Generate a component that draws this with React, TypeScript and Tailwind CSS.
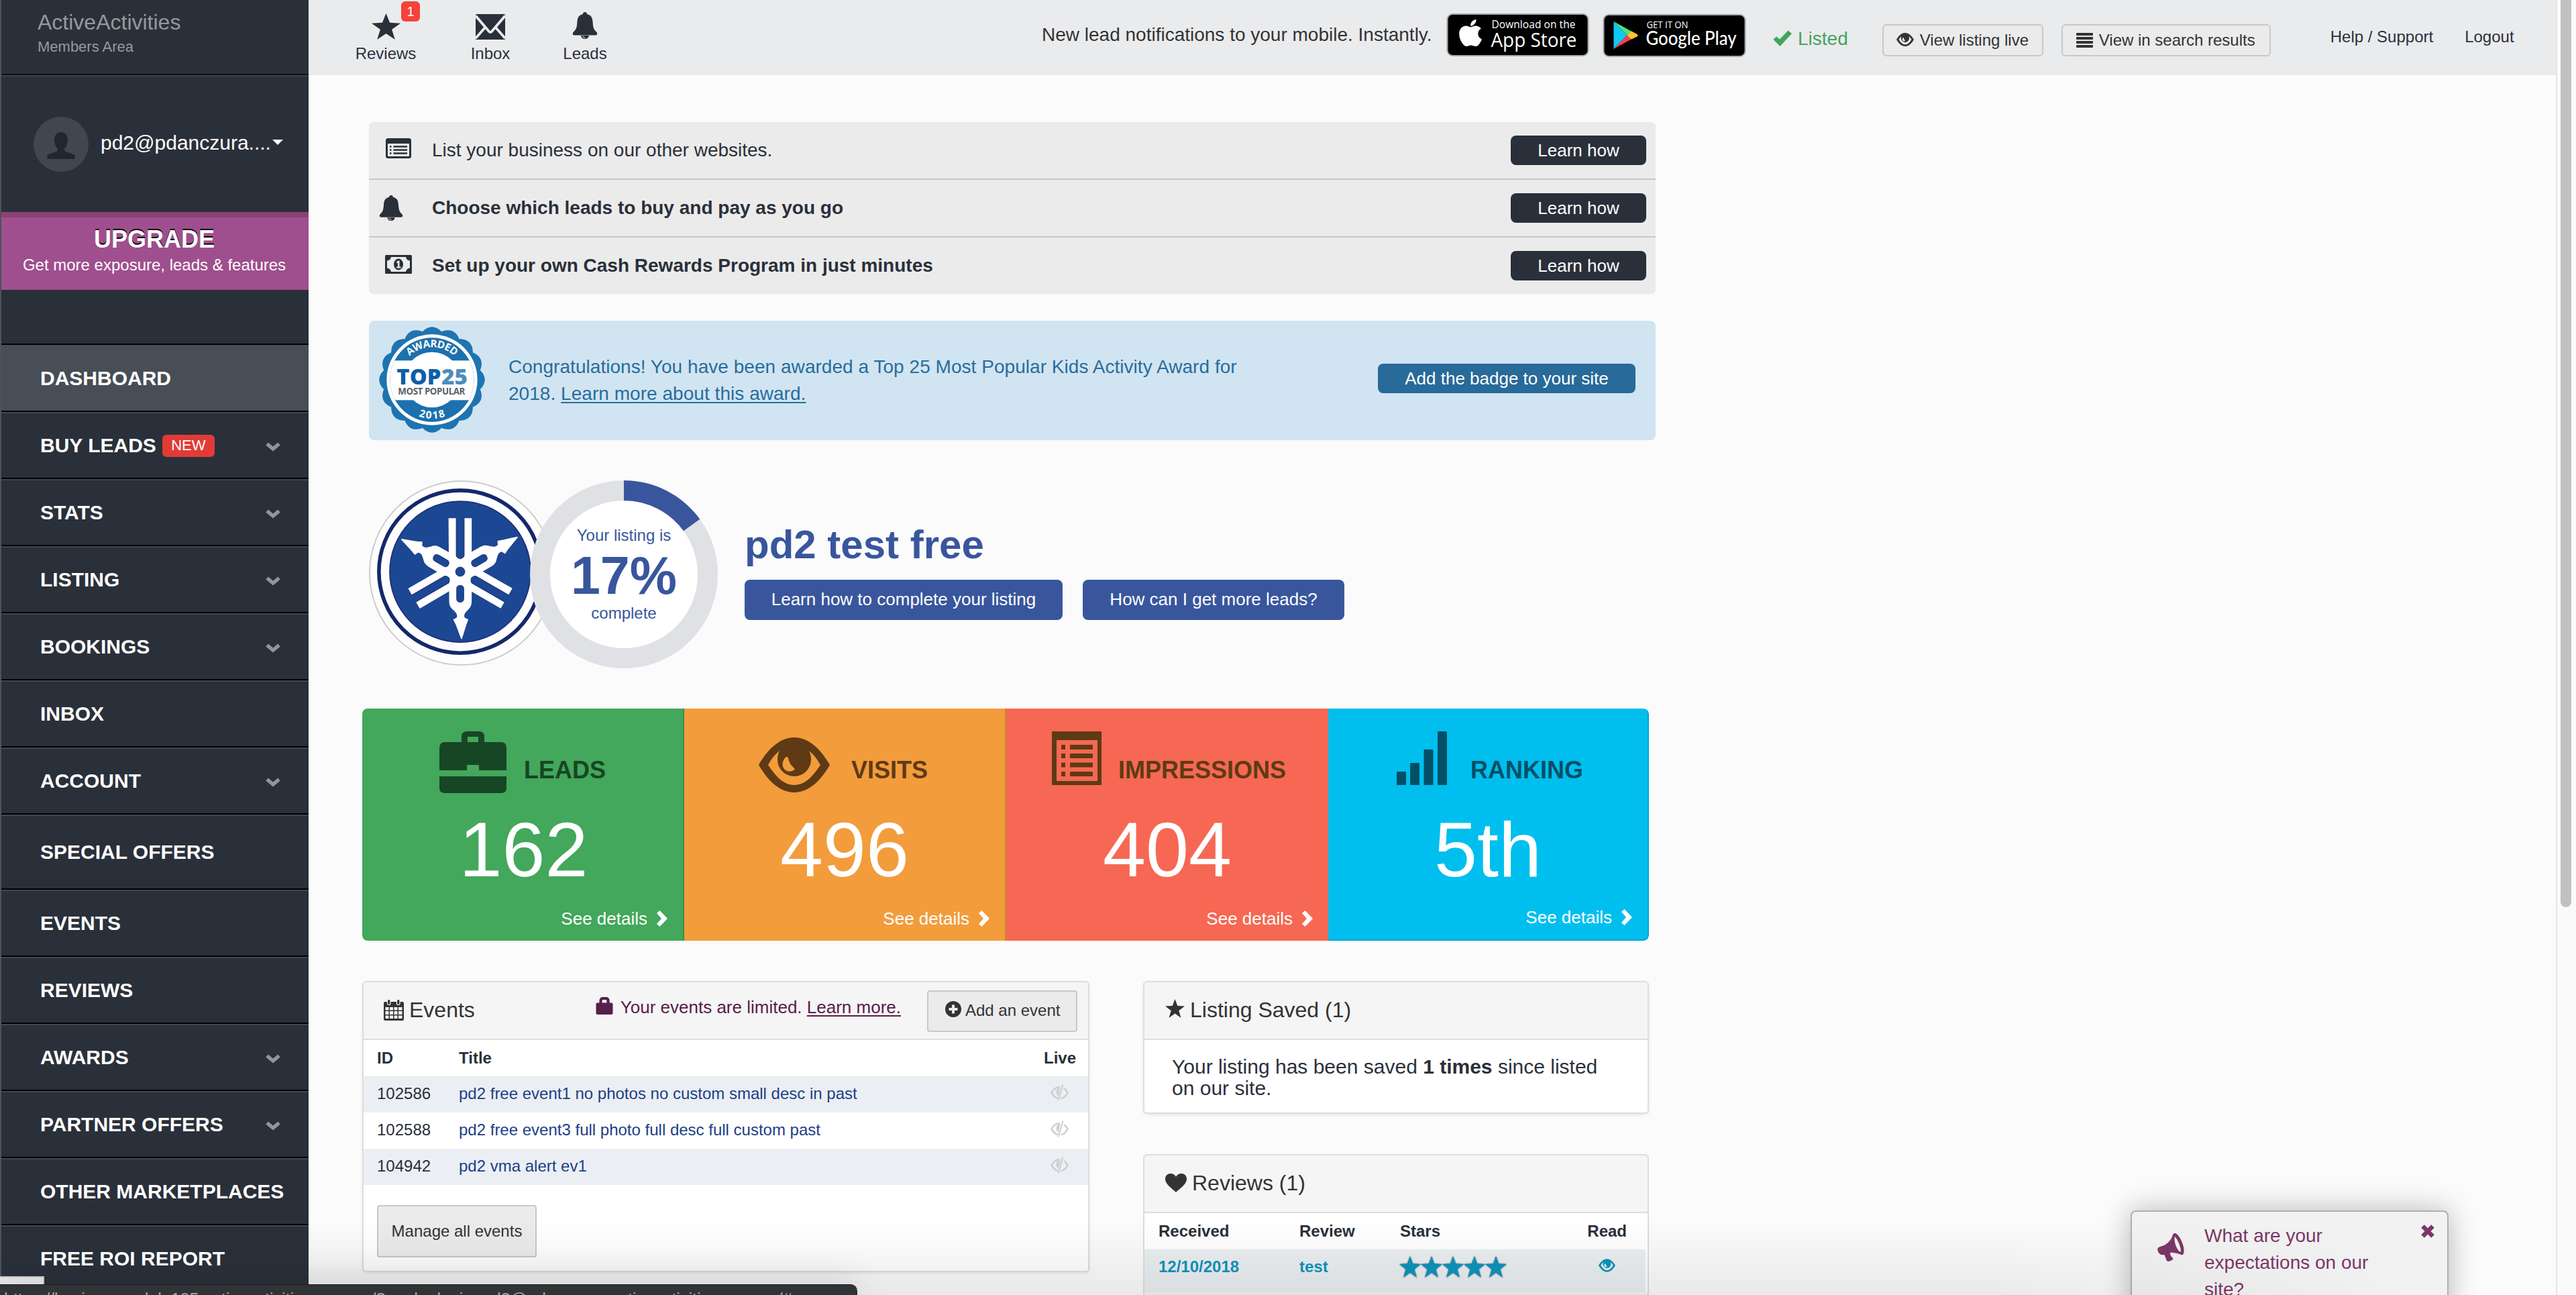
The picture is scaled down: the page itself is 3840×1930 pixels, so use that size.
import React from "react";
import { FaApple } from "react-icons/fa";

type IconProps = { className?: string };

const StarIcon = ({ className }: IconProps) => (
  <svg viewBox="0 0 100 96" preserveAspectRatio="none" className={className} fill="currentColor">
    <path d="M50 0L63 34L100 36L70 59L81 96L50 74L19 96L30 59L0 36L37 34Z" />
  </svg>
);

const BellIcon = ({ className }: IconProps) => (
  <svg viewBox="0 0 38 40" preserveAspectRatio="none" className={className} fill="currentColor">
    <path d="M19 0C21 0 22 1 22 3C28 4.500 30 8 30.500 14C31 23 32 26 36.500 30Q38.500 34 35 34.500H3Q-0.500 34 1.500 30C6 26 7 23 7.500 14C8 8 10 4.500 16 3C16 1 17 0 19 0Z" />
    <path d="M13 35H25C24.500 38 22.500 40 19 40S13.500 38 13 35Z" />
    <path d="M15.500 35.500Q16 38.300 19.500 38.500" fill="none" stroke="#ebebeb" strokeWidth="1" />
  </svg>
);

const MailIcon = ({ className }: IconProps) => (
  <svg viewBox="0 0 44 38" className={className}>
    <rect width="44" height="38" rx="1.500" fill="currentColor" />
    <path d="M0 2.500L20 26Q22 28 24 26L44 2.500M0 36L15 19M44 36L29 19" fill="none" stroke="#eaebed" strokeWidth="3.800" />
  </svg>
);

const ListAltIcon = ({ className }: IconProps) => (
  <svg viewBox="0 0 38 30" className={className}>
    <rect width="38" height="30" rx="3.500" fill="currentColor" />
    <rect x="3" y="8" width="32" height="19" rx="1" fill="#ebebeb" />
    <path d="M6 12.500H8.500M6 17.500H8.500M6 22.500H8.500M11.500 12.500H32M11.500 17.500H32M11.500 22.500H32" stroke="currentColor" strokeWidth="2.400" />
  </svg>
);

const MoneyIcon = ({ className }: IconProps) => (
  <svg viewBox="0 0 40 28" className={className}>
    <rect width="40" height="28" rx="1.500" fill="currentColor" />
    <path d="M9 3H31Q32 8 37 8.500V19.500Q32 20 31 25H9Q8 20 3 19.500V8.500Q8 8 9 3Z" fill="#ebebeb" />
    <ellipse cx="20" cy="14" rx="7" ry="8.500" fill="currentColor" />
    <path d="M17 10.500L19.500 8.500H21.500V17.500H23.500V19.500H17V17.500H19V11.500L17.500 12.500Z" fill="#ebebeb" />
  </svg>
);

const EyeIcon = ({ className }: IconProps) => (
  <svg viewBox="0 0 106 82" className={className} fill="currentColor">
    <path
      fillRule="evenodd"
      d="M0 41C12 20 30 0 53 0S94 20 106 41C94 62 76 82 53 82S12 62 0 41ZM14 41C24 56 36 71 53 71S82 56 92 41C88 34 84 27 75 20C77 24 78 28 78 33A25 25 0 0 1 28 33C28 28 29 24 31 20C22 27 18 34 14 41ZM41 29C35 33 34 43 38 47C42 52 50 52 54 47C50 43 46 40 44 31Q43 28 41 29Z"
    />
  </svg>
);

const EyeOffIcon = ({ className }: IconProps) => (
  <svg viewBox="0 0 27 25" className={className} fill="none" stroke="currentColor">
    <path d="M14 4C8 4 4 8 1.500 12.500C4 17 7 20 11 21" strokeWidth="2.600" />
    <path d="M20 6C22.500 7.500 24.500 10 25.500 12.500C23.500 16.500 20 20.500 15.500 21" strokeWidth="2.600" />
    <path d="M12 6C8 8 8 15 11.500 17L14 5Z" fill="currentColor" strokeWidth="1" />
    <path d="M18.500 0.500L11.500 24.500" strokeWidth="2.200" />
  </svg>
);

const BriefcaseIcon = ({ className }: IconProps) => (
  <svg viewBox="0 0 100 92" className={className} fill="currentColor">
    <path
      fillRule="evenodd"
      d="M33 16V8Q33 0 41 0H59Q67 0 67 8V16H92Q100 16 100 25V58H59V50H41V58H0V25Q0 16 8 16ZM42 8V16H58V8Z"
    />
    <path d="M0 67H100V84Q100 92 92 92H8Q0 92 0 84Z" />
  </svg>
);

const ListCardIcon = ({ className }: IconProps) => (
  <svg viewBox="0 0 74 80" className={className} fill="currentColor">
    <path
      fillRule="evenodd"
      d="M1 0H73Q74 0 74 1V79Q74 80 73 80H1Q0 80 0 79V1Q0 0 1 0ZM8 13Q7 13 7 14V73Q7 74 8 74H67Q68 74 68 73V14Q68 13 67 13Z"
    />
    <path d="M14 20h6v7h-6zM27 20h34v7h-34zM14 33h6v7h-6zM27 33h34v7h-34zM14 46.500h6v7h-6zM27 46.500h34v7h-34zM14 60h6v7h-6zM27 60h34v7h-34z" />
  </svg>
);

const SignalIcon = ({ className }: IconProps) => (
  <svg viewBox="0 0 75 80" className={className} fill="currentColor">
    <rect x="0" y="60" width="14" height="20" rx="1.500" />
    <rect x="20" y="47" width="14" height="33" rx="1.500" />
    <rect x="40.500" y="27" width="14" height="53" rx="1.500" />
    <rect x="61" y="0" width="14" height="80" rx="1.500" />
  </svg>
);

const CheckIcon = ({ className }: IconProps) => (
  <svg viewBox="0 0 28 24" className={className} fill="currentColor">
    <path d="M0.500 14L5 9.500L10 13.500L22.500 0.500L28 5L10.500 24Z" />
  </svg>
);

const ChevronDown = ({ className }: IconProps) => (
  <svg viewBox="0 0 22 14" className={className} fill="none" stroke="currentColor" strokeWidth="5.500">
    <path d="M2 2.500L11 10L20 2.500" />
  </svg>
);

const ChevronRight = ({ className }: IconProps) => (
  <svg viewBox="0 0 16 24" className={className} fill="currentColor">
    <path d="M0 4L4.500 0L16 12L4.500 24L0 20L7 12Z" />
  </svg>
);

const CalendarIcon = ({ className }: IconProps) => (
  <svg viewBox="0 0 30 32" className={className}>
    <path d="M2 4H28Q30 4 30 6V30Q30 32 28 32H2Q0 32 0 30V6Q0 4 2 4Z" fill="currentColor" />
    <path d="M2.500 12h5v4.500h-5zM9 12h5v4.500h-5zM15.500 12h5v4.500h-5zM22 12h5.500v4.500h-5.500zM2.500 18h5v5h-5zM9 18h5v5h-5zM15.500 18h5v5h-5zM22 18h5.500v5h-5.500zM2.500 24.500h5v4.500h-5zM9 24.500h5v4.500h-5zM15.500 24.500h5v4.500h-5zM22 24.500h5.500v4.500h-5.500z" fill="#f5f5f5" />
    <rect x="5.500" y="0.500" width="4.500" height="8" rx="2" fill="currentColor" stroke="#f5f5f5" strokeWidth="1.200" />
    <rect x="19.500" y="0.500" width="4.500" height="8" rx="2" fill="currentColor" stroke="#f5f5f5" strokeWidth="1.200" />
  </svg>
);

const LockIcon = ({ className }: IconProps) => (
  <svg viewBox="0 0 26 26" className={className}>
    <rect x="0.500" y="8.500" width="25" height="17.500" rx="2" fill="currentColor" />
    <path d="M7.500 10V5.500Q7.500 2 11 2H15Q18.500 2 18.500 5.500V10" fill="none" stroke="currentColor" strokeWidth="4.200" />
  </svg>
);

const PlusCircle = ({ className }: IconProps) => (
  <svg viewBox="0 0 24 24" className={className}>
    <circle cx="12" cy="12" r="12" fill="currentColor" />
    <path d="M12 5.500V18.500M5.500 12H18.500" stroke="#ebebeb" strokeWidth="4" />
  </svg>
);

const HeartIcon = ({ className }: IconProps) => (
  <svg viewBox="0 0 32 28" className={className} fill="currentColor">
    <path d="M16 28C13 24 0 17 0 8C0 3 3.500 0 8 0C12 0 15 2.500 16 5C17 2.500 20 0 24 0C28.500 0 32 3 32 8C32 17 19 24 16 28Z" />
  </svg>
);

const MegaphoneIcon = ({ className }: IconProps) => (
  <svg viewBox="0 0 40 42" className={className} fill="currentColor">
    <path
      fillRule="evenodd"
      d="M25 0C29 -1 34 6 37 14C40 22 41 30 37 32.500C32 31 25 28 19 29C19 32 20 34 22 36C24 37 23 39 22 40L17 42C15 42 14 41 13.500 40L10.500 32C6 33 3 31.500 1 27.500C-0.500 24 0 21 4 20C14 18 21 10 23 2Q23.500 0.500 25 0ZM26 5C24 10 28 24 34 28C37 27 32 11 26 5Z"
    />
  </svg>
);

const Person = ({ className }: IconProps) => (
  <svg viewBox="0 0 42 40" className={className} fill="currentColor">
    <path d="M21 0C28 0 31 5 31 12C31 18 28 22 26 25V27C28 31 40 31 41.500 35V40H0.500V35C2 31 14 31 16 27V25C14 22 11 18 11 12C11 5 14 0 21 0Z" />
  </svg>
);

function AppStoreBadge() {
  return (
    <svg viewBox="0 0 212 64" className="h-[64px] w-[213px]">
      <rect x="1" y="1" width="210" height="62" rx="8" fill="#000" stroke="#a6a6a6" strokeWidth="2" />
      <text x="67" y="22" textLength="125" fontFamily="Open Sans, sans-serif" fontSize="15.500" fontWeight="500" fill="#fff">Download on the</text>
      <text x="66" y="50" textLength="128" lengthAdjust="spacingAndGlyphs" fontFamily="Open Sans, sans-serif" fontSize="29.500" fontWeight="500" fill="#fff">App Store</text>
    </svg>
  );
}

function GooglePlayBadge() {
  return (
    <svg viewBox="0 0 213 64" className="h-[64px] w-[214px]">
      <rect x="1" y="1" width="211" height="62" rx="8" fill="#000" stroke="#a6a6a6" strokeWidth="2" />
      <path d="M16 11V52L36 31.500Z" fill="#10c8f5" />
      <path d="M16 11L43 26L36 31.500Z" fill="#4fe27a" />
      <path d="M16 52L43 37L36 31.500Z" fill="#f6404a" />
      <path d="M42.500 25.500L51 30Q53 31.500 51 33.500L42.500 37.500L36 31.500Z" fill="#fdc62f" />
      <text x="65" y="21" textLength="62" lengthAdjust="spacingAndGlyphs" fontFamily="Open Sans, sans-serif" fontSize="14" fill="#fff">GET IT ON</text>
      <text x="64" y="46" textLength="135" lengthAdjust="spacingAndGlyphs" fontFamily="Lato, sans-serif" fontSize="29" fontWeight="500" fill="#fff">Google Play</text>
    </svg>
  );
}

const scallop = (() => {
  let d = "";
  for (let i = 0; i < 720; i++) {
    const t = (i * Math.PI) / 360;
    const r = 219 + 17 * Math.pow(Math.abs(Math.cos(8 * t)), 0.9);
    d += `${i ? "L" : "M"}${(240 + r * Math.sin(t)).toFixed(1)} ${(240 - r * Math.cos(t)).toFixed(1)}`;
  }
  return d + "Z";
})();

function AwardBadge() {
  return (
    <svg viewBox="0 0 480 480" className="h-[160px] w-[160px]">
      <defs>
        <path id="arcTop" d="M94 240A146 146 0 0 1 386 240" />
        <path id="arcBottom" d="M66 240A174 174 0 0 0 414 240" />
        <clipPath id="disc"><circle cx="240" cy="240" r="188" /></clipPath>
      </defs>
      <path d={scallop} fill="#1d74b0" />
      <circle cx="240" cy="240" r="203" fill="#fff" />
      <circle cx="240" cy="240" r="188" fill="#1d70ae" />
      <g clipPath="url(#disc)">
        <circle cx="240" cy="240" r="124" fill="#fff" />
        <rect x="40" y="154" width="400" height="177" fill="#fff" />
      </g>
      <text fontFamily="Open Sans, sans-serif" fontSize="46" fontWeight="700" fill="#fff" textAnchor="middle">
        <textPath href="#arcTop" startOffset="50%" textLength="222">AWARDED</textPath>
      </text>
      <text fontFamily="Open Sans, sans-serif" fontSize="46" fontWeight="700" fill="#fff" textAnchor="middle">
        <textPath href="#arcBottom" startOffset="50%" textLength="122">2018</textPath>
      </text>
      <text x="82" y="261" textLength="198" lengthAdjust="spacingAndGlyphs" fontFamily="Open Sans, sans-serif" fontSize="96" fontWeight="800" fill="#0c5fa8">TOP</text>
      <text x="282" y="261" textLength="117" lengthAdjust="spacingAndGlyphs" fontFamily="Open Sans, sans-serif" fontSize="96" fontWeight="800" fill="#4d8dbf">25</text>
      <text x="88" y="307" textLength="300" fontFamily="Open Sans, sans-serif" fontSize="40" fontWeight="700" fill="#5d5f63">MOST POPULAR</text>
    </svg>
  );
}

function ForkLogo() {
  const turns = ["rotate(0)", "rotate(120)", "rotate(240)"];
  return (
    <svg viewBox="-413 -413 826 826" className="h-[272px] w-[272px]">
      <g transform="translate(-6 -6)">
        <circle r="368" fill="#fdfdfd" stroke="#14286b" strokeWidth="17" />
        <circle r="319" fill="#1c4792" stroke="#1f2d78" strokeWidth="5" />
        {turns.map((t) => (
          <path
            key={t}
            transform={t}
            fill="#fff"
            d="M-53 -242H-18V-60H18V-242H52V135C51 165 36 168 22 188Q16 196 20 208L37 216L28 240L8 304H4L-20 240L-32 216L-16 208Q-12 196 -18 188C-32 168 -50 165 -50 135Z"
          />
        ))}
        {turns.map((t) => (
          <g key={t} transform={t} fill="#1c4792" stroke="#22307a" strokeWidth="3">
            <rect x="-16" y="62" width="32" height="76" rx="14" />
            <path d="M-18 -242V-72Q-16 -62 0 -58Q16 -62 18 -72V-242" />
          </g>
        ))}
        <circle r="21" fill="#1c4792" stroke="#22307a" strokeWidth="3" />
      </g>
    </svg>
  );
}

function Donut() {
  return (
    <svg viewBox="-140 -140 280 280" className="absolute inset-0 h-[280px] w-[280px]">
      <circle r="125" fill="#fff" stroke="#e0e1e5" strokeWidth="30" />
      <path d="M0 -125A125 125 0 0 1 101.130 -73.470" fill="none" stroke="#39569d" strokeWidth="30" />
    </svg>
  );
}

type NavEntry = { label: string; badge?: string; arrow?: boolean; tall?: boolean; active?: boolean };
const nav: NavEntry[] = [
  { label: "DASHBOARD", active: true },
  { label: "BUY LEADS", badge: "NEW", arrow: true },
  { label: "STATS", arrow: true },
  { label: "LISTING", arrow: true },
  { label: "BOOKINGS", arrow: true },
  { label: "INBOX" },
  { label: "ACCOUNT", arrow: true },
  { label: "SPECIAL OFFERS", tall: true },
  { label: "EVENTS" },
  { label: "REVIEWS" },
  { label: "AWARDS", arrow: true },
  { label: "PARTNER OFFERS", arrow: true },
  { label: "OTHER MARKETPLACES" },
  { label: "FREE ROI REPORT" },
];

function NavItem({ item }: { item: NavEntry }) {
  return (
    <li
      className={`flex shrink-0 items-center border-t-2 border-b-2 border-b-black pr-[42px] pl-[58px] ${
        item.active ? "border-t-[#474e56] bg-[#474e56]" : "border-t-[#3f4751]"
      } ${item.tall ? "h-[112px]" : "h-[100px]"}`}
    >
      <span className="text-[30px] leading-none font-bold whitespace-nowrap text-white">{item.label}</span>
      {item.badge && (
        <span className="ml-[9px] flex h-[33px] w-[78px] items-center justify-center rounded-md bg-[#e23b36] text-[22px] leading-none text-white">
          {item.badge}
        </span>
      )}
      {item.arrow && <ChevronDown className="mt-1 ml-auto h-[14px] w-[22px] text-[#959595]" />}
    </li>
  );
}

function Sidebar() {
  return (
    <aside className="flex h-full w-[460px] shrink-0 flex-col overflow-hidden border-l-2 border-[#4d5359] bg-[#2a303a]">
      <div className="flex h-[112px] shrink-0 flex-col border-b-2 border-[#0c0f13] pt-[17px] pl-[54px]">
        <span className="text-[32px] leading-[32px] text-[#97999c]">ActiveActivities</span>
        <span className="mt-[10px] text-[22px] leading-[22px] text-[#97999c]">Members Area</span>
      </div>
      <div className="flex h-[204px] shrink-0 items-center border-t-2 border-[#3b4551] pl-[48px]">
        <div className="flex h-[82px] w-[82px] items-center justify-center rounded-full bg-[#404751]">
          <Person className="mt-1 h-[40px] w-[42px] text-[#22272f]" />
        </div>
        <span className="mb-[5px] ml-[18px] w-[256px] text-[30px] leading-none text-white">pd2@pdanczura....</span>
        <span className="mt-[-6px] h-0 w-0 border-x-8 border-t-8 border-x-transparent border-t-white" />
      </div>
      <div className="flex h-[116px] shrink-0 flex-col items-center border-t-8 border-[#8c4174] bg-[#9f4f8e] pt-[15px] pr-[2px] text-white">
        <span className="text-[36px] leading-[36px] font-bold [text-shadow:0_-2px_0_#000]">UPGRADE</span>
        <span className="mt-[8px] text-[24px] leading-[24px] whitespace-nowrap">Get more exposure, leads &amp; features</span>
      </div>
      <div className="h-[82px] shrink-0 border-b-2 border-black" />
      <ul className="flex flex-col">
        {nav.map((n) => (
          <NavItem key={n.label} item={n} />
        ))}
      </ul>
    </aside>
  );
}

function Header() {
  return (
    <header className="flex h-[112px] shrink-0 items-start bg-[#eaebed] text-[#2a303a]">
      <nav className="flex pl-[69px] text-[24px] leading-none">
        <a className="relative flex w-[92px] flex-col items-center">
          <StarIcon className="mt-[20px] h-[39px] w-[43px]" />
          <span className="mt-[9px]">Reviews</span>
          <span className="absolute top-[2px] left-[69px] flex h-[30px] w-[28px] items-center justify-center rounded-md bg-[#f5423a] text-[20px] text-white">1</span>
        </a>
        <a className="ml-[79px] flex w-[62px] flex-col items-center">
          <MailIcon className="mt-[21px] h-[38px] w-[44px]" />
          <span className="mt-[9px]">Inbox</span>
        </a>
        <a className="ml-[76px] flex w-[68px] flex-col items-center">
          <BellIcon className="mt-[18px] h-[40px] w-[38px]" />
          <span className="mt-[10px]">Leads</span>
        </a>
      </nav>
      <div className="ml-[647px] flex">
        <span className="mt-[38px] w-[583px] text-[28px] leading-none whitespace-nowrap text-[#333]">
          New lead notifications to your mobile. Instantly.
        </span>
        <span className="relative mt-[20px] ml-[20px]">
          <AppStoreBadge />
          <FaApple className="absolute top-[6px] left-[16px] h-[46px] w-[40px] text-white" />
        </span>
        <span className="mt-[21px] ml-[20px]">
          <GooglePlayBadge />
        </span>
      </div>
      <div className="mt-[44px] ml-[40px] flex items-start text-[28px] leading-none text-[#42a55d]">
        <CheckIcon className="mt-[1px] h-[24px] w-[28px]" />
        <span className="ml-[9px]">Listed</span>
      </div>
      <div className="mt-[36px] ml-[51px] flex gap-[27px] text-[24px] leading-none whitespace-nowrap text-[#333]">
        <button className="flex h-[48px] w-[240px] items-center rounded-md border-2 border-[#c8c8c8] bg-[#ebebeb] pl-[19px]">
          <EyeIcon className="mb-[2px] h-[20px] w-[26px]" />
          <span className="ml-[9px]">View listing live</span>
        </button>
        <button className="flex h-[48px] w-[312px] items-center rounded-md border-2 border-[#c8c8c8] bg-[#ebebeb] pl-[20px]">
          <span className="flex h-[22px] w-[25px] flex-col justify-between">
            <i className="h-1 rounded-[1px] bg-[#333]" />
            <i className="h-1 rounded-[1px] bg-[#333]" />
            <i className="h-1 rounded-[1px] bg-[#333]" />
            <i className="h-1 rounded-[1px] bg-[#333]" />
          </span>
          <span className="ml-[9px]">View in search results</span>
        </button>
      </div>
      <div className="mt-[43px] ml-[89px] flex gap-[47px] text-[24px] leading-none whitespace-nowrap">
        <a>Help / Support</a>
        <a>Logout</a>
      </div>
    </header>
  );
}

function NoticeRow({ icon, text, bold, last }: { icon: React.ReactNode; text: string; bold?: boolean; last?: boolean }) {
  return (
    <div className={`flex items-center pr-[14px] ${last ? "h-[84px]" : "h-[86px] border-b-2 border-[#c6c6c6]"}`}>
      <span className="flex w-[94px]">{icon}</span>
      <span className={`text-[28px] leading-none ${bold ? "font-bold" : ""}`}>{text}</span>
      <button className="ml-auto flex h-[44px] w-[202px] items-center justify-center rounded-lg bg-[#2a303a] pb-[1px] text-[26px] leading-none text-white">
        Learn how
      </button>
    </div>
  );
}

function Notices() {
  return (
    <section className="flex h-[256px] flex-col rounded-md bg-[#ebebeb] text-[#2a303a]">
      <NoticeRow icon={<ListAltIcon className="mb-[6px] ml-[25px] h-[30px] w-[38px]" />} text="List your business on our other websites." />
      <NoticeRow bold icon={<BellIcon className="ml-[15px] h-[38px] w-[36px]" />} text="Choose which leads to buy and pay as you go" />
      <NoticeRow bold last icon={<MoneyIcon className="mb-[4px] ml-[24px] h-[28px] w-[40px]" />} text="Set up your own Cash Rewards Program in just minutes" />
    </section>
  );
}

function Award() {
  return (
    <section className="mt-[40px] flex h-[178px] items-start rounded-lg bg-[#d1e4f1] pr-[30px] pl-[14px] text-[#286d9c]">
      <div className="mt-[8px]">
        <AwardBadge />
      </div>
      <p className="mt-[49px] ml-[34px] text-[28px] leading-[40px] tracking-[0.04px] whitespace-nowrap">
        Congratulations! You have been awarded a Top 25 Most Popular Kids Activity Award for
        <br />
        2018. <a className="underline decoration-2 underline-offset-[3px]">Learn more about this award.</a>
      </p>
      <button className="mt-[64px] ml-auto flex h-[44px] w-[384px] items-center justify-center rounded-lg bg-[#286a99] pb-[1px] text-[26px] leading-none text-white">
        Add the badge to your site
      </button>
    </section>
  );
}

function Profile() {
  return (
    <section className="mt-[60px] flex h-[280px]">
      <div className="flex h-[276px] w-[276px] shrink-0 items-center justify-center overflow-hidden rounded-full border-2 border-[#cbccd0] bg-[#fefefc]">
        <ForkLogo />
      </div>
      <div className="relative -ml-[36px] flex h-[280px] w-[280px] shrink-0 flex-col items-center text-[#39569d]">
        <Donut />
        <span className="relative mt-[70px] text-[24px] leading-[24px]">Your listing is</span>
        <span className="relative mt-[8px] text-[79px] leading-[80px] font-bold">17%</span>
        <span className="relative mt-[4px] text-[24px] leading-[24px]">complete</span>
      </div>
      <div className="ml-[40px] flex flex-col">
        <h1 className="mt-[66px] text-[60px] leading-[60px] font-bold text-[#39569d]">pd2 test free</h1>
        <div className="mt-[22px] flex gap-[30px] text-[26px] leading-none text-white">
          <button className="flex h-[60px] w-[474px] items-center justify-center rounded-lg bg-[#39569d] pb-[2px]">Learn how to complete your listing</button>
          <button className="flex h-[60px] w-[390px] items-center justify-center rounded-lg bg-[#39569d] pb-[2px]">How can I get more leads?</button>
        </div>
      </div>
    </section>
  );
}

type CardProps = { tone: string; ink: string; icon: React.ReactNode; label: string; value: string; link: string };
function StatCard({ tone, ink, icon, label, value, link }: CardProps) {
  return (
    <div className={`flex h-[346px] flex-col ${tone}`}>
      <div className={`flex h-[126px] items-start ${ink}`}>
        {icon}
        <span className="mt-[74px] text-[36px] leading-[36px] font-bold">{label}</span>
      </div>
      <span className="mt-[26px] text-center text-[115px] leading-[116px] text-white">{value}</span>
      <a className={`flex items-center justify-end text-[26px] leading-[26px] text-white ${link}`}>
        See details
        <ChevronRight className="ml-[14px] h-[24px] w-[16px]" />
      </a>
    </div>
  );
}

function Stats() {
  return (
    <section className="mt-[60px] -ml-[10px] flex w-[1918px] overflow-hidden rounded-lg">
      <StatCard
        tone="w-[480px] border-r-2 border-[#388f50] bg-[#43a75c] pl-[3px]"
        ink="text-[#174625] pl-[112px]"
        icon={<BriefcaseIcon className="mt-[34px] mr-[26px] h-[92px] w-[100px]" />}
        label="LEADS"
        value="162"
        link="mt-[32px] pr-[23px]"
      />
      <StatCard
        tone="w-[480px] border-r-2 border-[#cc8333] bg-[#f29c3c]"
        ink="text-[#5f3a14] pl-[111px]"
        icon={<EyeIcon className="mt-[43px] mr-[32px] h-[82px] w-[106px]" />}
        label="VISITS"
        value="496"
        link="mt-[32px] pr-[23px]"
      />
      <StatCard
        tone="w-[480px] bg-[#f66853]"
        ink="text-[#5f3a14] pl-[68px]"
        icon={<ListCardIcon className="mt-[34px] mr-[25px] h-[80px] w-[74px]" />}
        label="IMPRESSIONS"
        value="404"
        link="mt-[32px] pr-[23px]"
      />
      <StatCard
        tone="w-[478px] rounded-r-lg border-r-2 border-b-2 border-[#00a5d0] bg-[#00bfee]"
        ink="text-[#034f66] pl-[102px]"
        icon={<SignalIcon className="mt-[34px] mr-[35px] h-[80px] w-[75px]" />}
        label="RANKING"
        value="5th"
        link="mt-[30px] pr-[23px]"
      />
    </section>
  );
}

const events = [
  { id: "102586", title: "pd2 free event1 no photos no custom small desc in past", row: "bg-[#ebeff3]" },
  { id: "102588", title: "pd2 free event3 full photo full desc full custom past", row: "bg-white" },
  { id: "104942", title: "pd2 vma alert ev1", row: "bg-[#ebeff3]" },
];

function EventsPanel() {
  return (
    <section className="h-[434px] w-[1084px] rounded-md border-2 border-[#ddd] bg-white shadow-[0_2px_4px_rgba(0,0,0,0.08)]">
      <div className="flex h-[86px] items-start rounded-t-md border-b-2 border-[#ddd] bg-[#f5f5f5] text-[#333]">
        <CalendarIcon className="mt-[25px] ml-[30px] h-[32px] w-[30px]" />
        <span className="mt-[25px] ml-[8px] text-[32px] leading-[32px]">Events</span>
        <div className="mt-[22px] ml-[180px] flex items-start whitespace-nowrap text-[#55204a]">
          <LockIcon className="h-[26px] w-[26px]" />
          <span className="mt-[2px] ml-[11px] text-[26px] leading-[26px]">
            Your events are limited. <a className="underline decoration-2 underline-offset-[3px]">Learn more.</a>
          </span>
        </div>
        <button className="mt-[12px] mr-[16px] ml-auto flex h-[62px] w-[224px] items-center rounded-sm border-2 border-[#c8c8c8] bg-[#ebebeb] pl-[25px] text-[24px] leading-none">
          <PlusCircle className="mb-[6px] h-[24px] w-[24px]" />
          <span className="mb-[3px] ml-[6px] whitespace-nowrap">Add an event</span>
        </button>
      </div>
      <div className="flex h-[54px] items-center pb-[1px] pl-[20px] text-[24px] leading-none font-bold text-[#2a303a]">
        <span className="w-[122px]">ID</span>
        <span>Title</span>
        <span className="mr-[18px] ml-auto">Live</span>
      </div>
      {events.map((e) => (
        <div key={e.id} className={`flex h-[54px] items-center pb-[2px] pl-[20px] text-[24px] leading-none text-[#2a303a] ${e.row}`}>
          <span className="w-[122px]">{e.id}</span>
          <a className="text-[#1c3e87]">{e.title}</a>
          <EyeOffIcon className="mr-[29px] mb-[4px] ml-auto h-[25px] w-[27px] text-[#cfcfcf]" />
        </div>
      ))}
      <button className="mt-[30px] ml-[20px] flex h-[78px] w-[238px] items-center justify-center rounded-sm border-2 border-[#c8c8c8] bg-[#ebebeb] pb-[1px] text-[24px] leading-none text-[#333]">
        Manage all events
      </button>
    </section>
  );
}

function SidePanels() {
  return (
    <div className="flex w-[754px] flex-col">
      <section className="h-[198px] rounded-md border-2 border-[#ddd] bg-white shadow-[0_2px_4px_rgba(0,0,0,0.08)]">
        <div className="flex h-[86px] items-start rounded-t-md border-b-2 border-[#ddd] bg-[#f5f5f5] text-[#333]">
          <StarIcon className="mt-[25px] ml-[31px] h-[28px] w-[29px]" />
          <span className="mt-[25px] ml-[8px] text-[32px] leading-[32px]">Listing Saved (1)</span>
        </div>
        <p className="mt-[24px] ml-[41px] text-[30px] leading-[32px] whitespace-nowrap text-[#2a303a]">
          Your listing has been saved <b>1 times</b> since listed
          <br />
          on our site.
        </p>
      </section>
      <section className="mt-[60px] h-[300px] rounded-t-md border-2 border-[#ddd] bg-[#f5f5f5]">
        <div className="flex h-[86px] items-start border-b-2 border-[#ddd] text-[#333]">
          <HeartIcon className="mt-[27px] ml-[31px] h-[28px] w-[32px]" />
          <span className="mt-[25px] ml-[8px] text-[32px] leading-[32px]">Reviews (1)</span>
        </div>
        <div className="bg-white pr-[3px] text-[24px] leading-none font-bold">
          <div className="flex h-[54px] items-center bg-white pb-[1px] pl-[21px] text-[#2a303a]">
            <span className="w-[210px]">Received</span>
            <span className="w-[150px]">Review</span>
            <span>Stars</span>
            <span className="mr-[28px] ml-auto">Read</span>
          </div>
          <div className="flex h-[64px] items-start bg-[#ebeff2] pt-[14px] pl-[21px] text-[#0e94bd]">
            <span className="w-[210px]">12/10/2018</span>
            <span className="w-[149px]">test</span>
            <span className="-mt-[4px] flex">
              {[0, 1, 2, 3, 4].map((i) => (
                <StarIcon key={i} className="h-[32px] w-[32px] drop-shadow-[0_0_1px_rgba(0,0,0,0.6)]" />
              ))}
            </span>
            <EyeIcon className="mr-[45px] ml-auto h-[20px] w-[25px]" />
          </div>
        </div>
      </section>
    </div>
  );
}

function Popup() {
  return (
    <div className="absolute top-[1804px] left-[3176px] flex h-[260px] w-[474px] items-start rounded-lg border-2 border-[#b0b0b0] bg-[#f2f2f2] text-[#7c3768] shadow-[0_0_44px_rgba(0,0,0,0.28)]">
      <MegaphoneIcon className="mt-[32px] ml-[38px] h-[42px] w-[40px]" />
      <p className="mt-[16px] ml-[30px] text-[28px] leading-[40px] whitespace-nowrap">
        What are your
        <br />
        expectations on our
        <br />
        site?
      </p>
      <svg viewBox="0 0 20 20" className="mt-[19px] mr-[19px] ml-auto h-[20px] w-[20px]">
        <path d="M2.500 2.500L17.500 17.500M17.500 2.500L2.500 17.500" stroke="currentColor" strokeWidth="6.500" />
      </svg>
    </div>
  );
}

export default function App() {
  return (
    <div className="relative flex h-[1930px] w-[3840px] overflow-hidden bg-[#fbfbfb] font-['Liberation_Sans',Arial,sans-serif]">
      <Sidebar />
      <main className="flex w-[3350px] shrink-0 flex-col">
        <Header />
        <div className="mt-[70px] ml-[90px] flex w-[1918px] flex-col">
          <Notices />
          <Award />
          <Profile />
          <Stats />
          <div className="mt-[60px] -ml-[10px] flex items-start gap-[80px]">
            <EventsPanel />
            <SidePanels />
          </div>
        </div>
      </main>
      <div className="flex w-[30px] justify-center border-l-2 border-[#e6e6e6] bg-[#fafafa] pr-[2px]">
        <div className="h-[1352px] w-[16px] rounded-b-full bg-[#c1c1c1]" />
      </div>
      <Popup />
      <div className="absolute bottom-0 left-[460px] h-[110px] w-[3340px] bg-linear-to-t from-black/7 to-transparent [mask-image:linear-gradient(to_right,black_75%,transparent_94%)]" />
      <div className="absolute top-[1902px] left-0 h-[40px] w-[66px] border-t-2 border-r-2 border-[#ccc] bg-[#e9e9e9]" />
      <div className="absolute top-[1914px] left-0 h-[16px] w-[1278px] rounded-tr-[10px] border-t border-[#1b1d1f] bg-[#313437] shadow-[0_0_50px_rgba(0,0,0,0.25)]">
        <div className="h-full overflow-hidden pt-[7px] pl-[6px] text-[25px] leading-[28px] whitespace-nowrap text-[#a3a5a7]">
          https://business.mdale195.activeactivities.com.au/?mode=login=pd2@pdanczura.activeactivities.com.au/#
        </div>
      </div>
    </div>
  );
}
